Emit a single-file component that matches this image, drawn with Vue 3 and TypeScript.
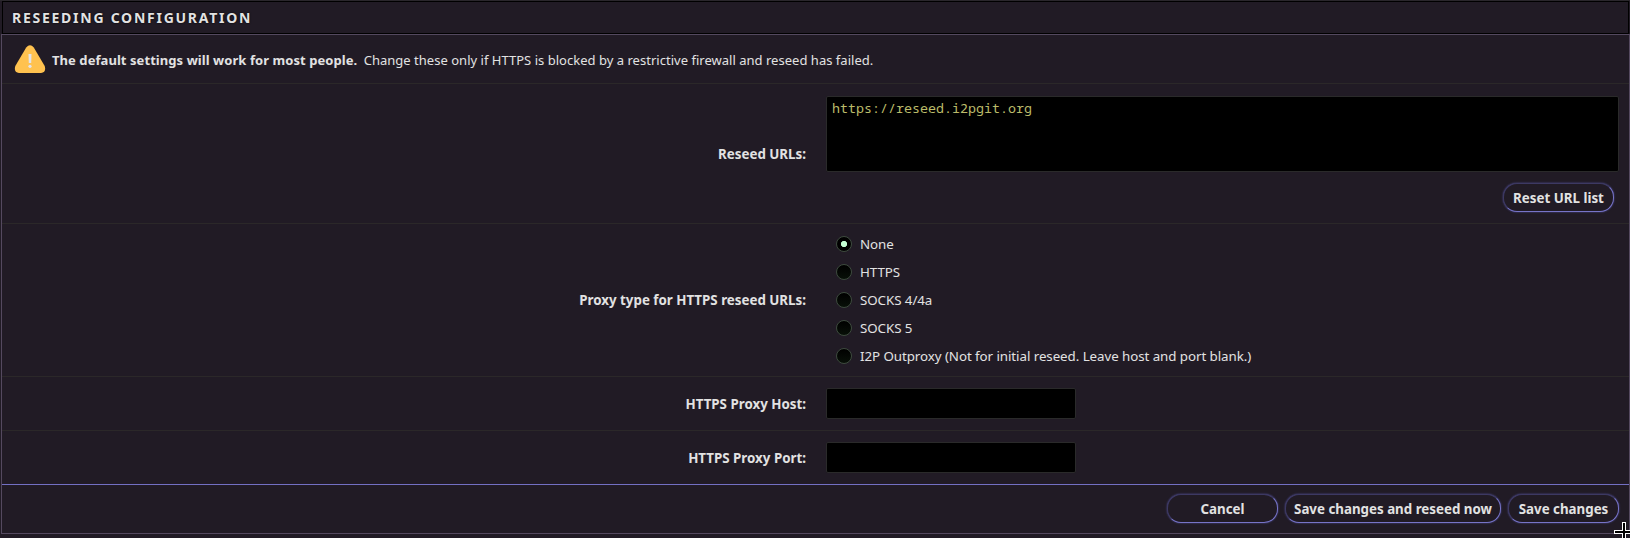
<script setup lang="ts">
import { ref } from 'vue'

const urls = ref('https://reseed.i2pgit.org')
const proxyType = ref('None')
const host = ref('')
const port = ref('')
const proxyTypes: string[] = [
  'None',
  'HTTPS',
  'SOCKS 4/4a',
  'SOCKS 5',
  'I2P Outproxy (Not for initial reseed. Leave host and port blank.)',
]
</script>

<template>
  <main class="page">
    <h3 class="title">Reseeding Configuration</h3>
    <form class="panel" @submit.prevent>
      <div class="notice">
        <svg class="warn" viewBox="0 0 32 28" aria-hidden="true">
          <path d="M12.2 2.5Q16 -1.8 19.8 2.5L30.7 21Q32.5 27.5 27 28H5Q-.5 27.5 1.3 21Z" fill="#ffc24f" />
          <path d="M14.5 9h3l-.3 9h-2.4z" fill="#e4e4ea" />
          <circle cx="16" cy="21.3" r="1.6" fill="#e4e4ea" />
        </svg>
        <p><b>The default settings will work for most people.</b> <span class="detail">Change these only if HTTPS is blocked by a restrictive firewall and reseed has failed.</span></p>
      </div>
      <div class="row urls">
        <label class="label" for="urls">Reseed URLs:</label>
        <div class="field stack">
          <textarea id="urls" v-model="urls" class="box area" spellcheck="false"></textarea>
          <button class="btn reset" type="button">Reset URL list</button>
        </div>
      </div>
      <div class="row proxy">
        <span class="label">Proxy type for HTTPS reseed URLs:</span>
        <div class="field radios">
          <label v-for="p in proxyTypes" :key="p" class="option">
            <input v-model="proxyType" class="radio" type="radio" name="proxy" :value="p" />
            <span>{{ p }}</span>
          </label>
        </div>
      </div>
      <div class="row host">
        <label class="label" for="host">HTTPS Proxy Host:</label>
        <div class="field"><input id="host" v-model="host" class="box text" type="text" /></div>
      </div>
      <div class="row port">
        <label class="label" for="port">HTTPS Proxy Port:</label>
        <div class="field"><input id="port" v-model="port" class="box text" type="text" /></div>
      </div>
      <div class="actions">
        <button class="btn cancel" type="button">Cancel</button>
        <button class="btn reseed" type="button">Save changes and reseed now</button>
        <button class="btn save" type="submit">Save changes</button>
      </div>
    </form>
    <svg class="cursor" viewBox="0 0 20 20" shape-rendering="crispEdges" aria-hidden="true">
      <path d="M8 0h4v8h8v4h-8v8H8v-8H0V8h8z" fill="#fff" />
      <path d="M9 1h2v8h8v2h-8v8H9v-8H1V9h8z" fill="#000" />
    </svg>
  </main>
</template>

<style>
body {
  background: #211b25;
  overflow: hidden;
}
</style>

<style scoped>
* {
  box-sizing: border-box;
}
.page {
  position: relative;
  width: 1630px;
  height: 538px;
  padding-left: 1px;
  overflow: hidden;
  background: #211b25;
  color: #e2e2e2;
  font: 13.333px/20px 'Noto Sans', sans-serif;
  border-top: 1px solid #2a272c;
}
.title {
  height: 33px;
  margin: 0 1px;
  padding: 0 9px;
  border: 1px solid #000;
  font-size: 14px;
  font-weight: 700;
  line-height: 32px;
  letter-spacing: 1.74px;
  text-transform: uppercase;
  text-shadow: 0 0 2px #000;
}
.panel {
  height: 500px;
  border: 1px solid #54495f;
}
.notice {
  display: flex;
  align-items: center;
  height: 49px;
  padding-left: 12px;
  border-bottom: 1px solid #2b2829;
  font-size: 13px;
}
.warn {
  width: 32px;
  height: 28px;
}
.notice p {
  margin: 0 0 0 6px;
  padding-top: 2px;
  white-space: nowrap;
}
.notice b {
  letter-spacing: 0.065px;
}
.detail {
  margin-left: 3px;
  letter-spacing: 0.02px;
}
.row {
  display: grid;
  grid-template-columns: 804px 1fr;
  column-gap: 20px;
  align-items: center;
  border-bottom: 1px solid #2b2829;
}
.urls {
  height: 140px;
}
.proxy {
  height: 153px;
}
.host,
.port {
  height: 54px;
}
.port {
  border-bottom-color: #7370c4;
}
.label {
  text-align: right;
  font-weight: 700;
}
.field {
  display: flex;
}
.stack {
  flex-direction: column;
  align-items: flex-start;
  padding: 1px 10px 0 0;
}
.box {
  display: block;
  margin: 0;
  border: 1px solid #2a2a2a;
  border-radius: 2px;
  background: #000;
  color: #bcbc6a;
  outline: none;
}
.area {
  width: 100%;
  height: 76px;
  padding: 2px 5px;
  resize: none;
  font: 13.333px/18px 'Noto Sans Mono', 'DejaVu Sans Mono', monospace;
}
.text {
  width: 250px;
  height: 31px;
}
.btn {
  height: 29px;
  padding: 0;
  border: 1px solid #6b68b8;
  border-color: #3d3963 #7774c8 #7774c8 #3d3963;
  border-radius: 14px;
  background: #211b25;
  box-shadow: 0 0 2px #5553a0;
  color: #e2e2e2;
  font: 700 13.333px/20px 'Noto Sans', sans-serif;
}
.reset {
  align-self: flex-end;
  width: 111px;
  margin: 11px 5px 0 0;
}
.radios {
  flex-direction: column;
  padding: 0 0 0 10px;
}
.option {
  display: flex;
  align-items: center;
  gap: 8px;
  height: 28px;
  letter-spacing: -0.06px;
}
.radio {
  appearance: none;
  width: 16px;
  height: 16px;
  margin: 0;
  border: 1px solid #3c4a3d;
  border-radius: 50%;
  background: linear-gradient(#000, #081008);
}
.radio:checked {
  background: radial-gradient(circle, #c4ffd4 0 2.8px, #000 3.4px);
}
.actions {
  display: flex;
  justify-content: flex-end;
  align-items: flex-start;
  gap: 7px;
  height: 48px;
  padding: 9px 10px 0 0;
}
.cancel {
  width: 111px;
}
.reseed {
  width: 216px;
}
.save {
  width: 111px;
}
.cursor {
  position: absolute;
  left: 1614px;
  top: 521px;
  width: 20px;
  height: 20px;
}
</style>
